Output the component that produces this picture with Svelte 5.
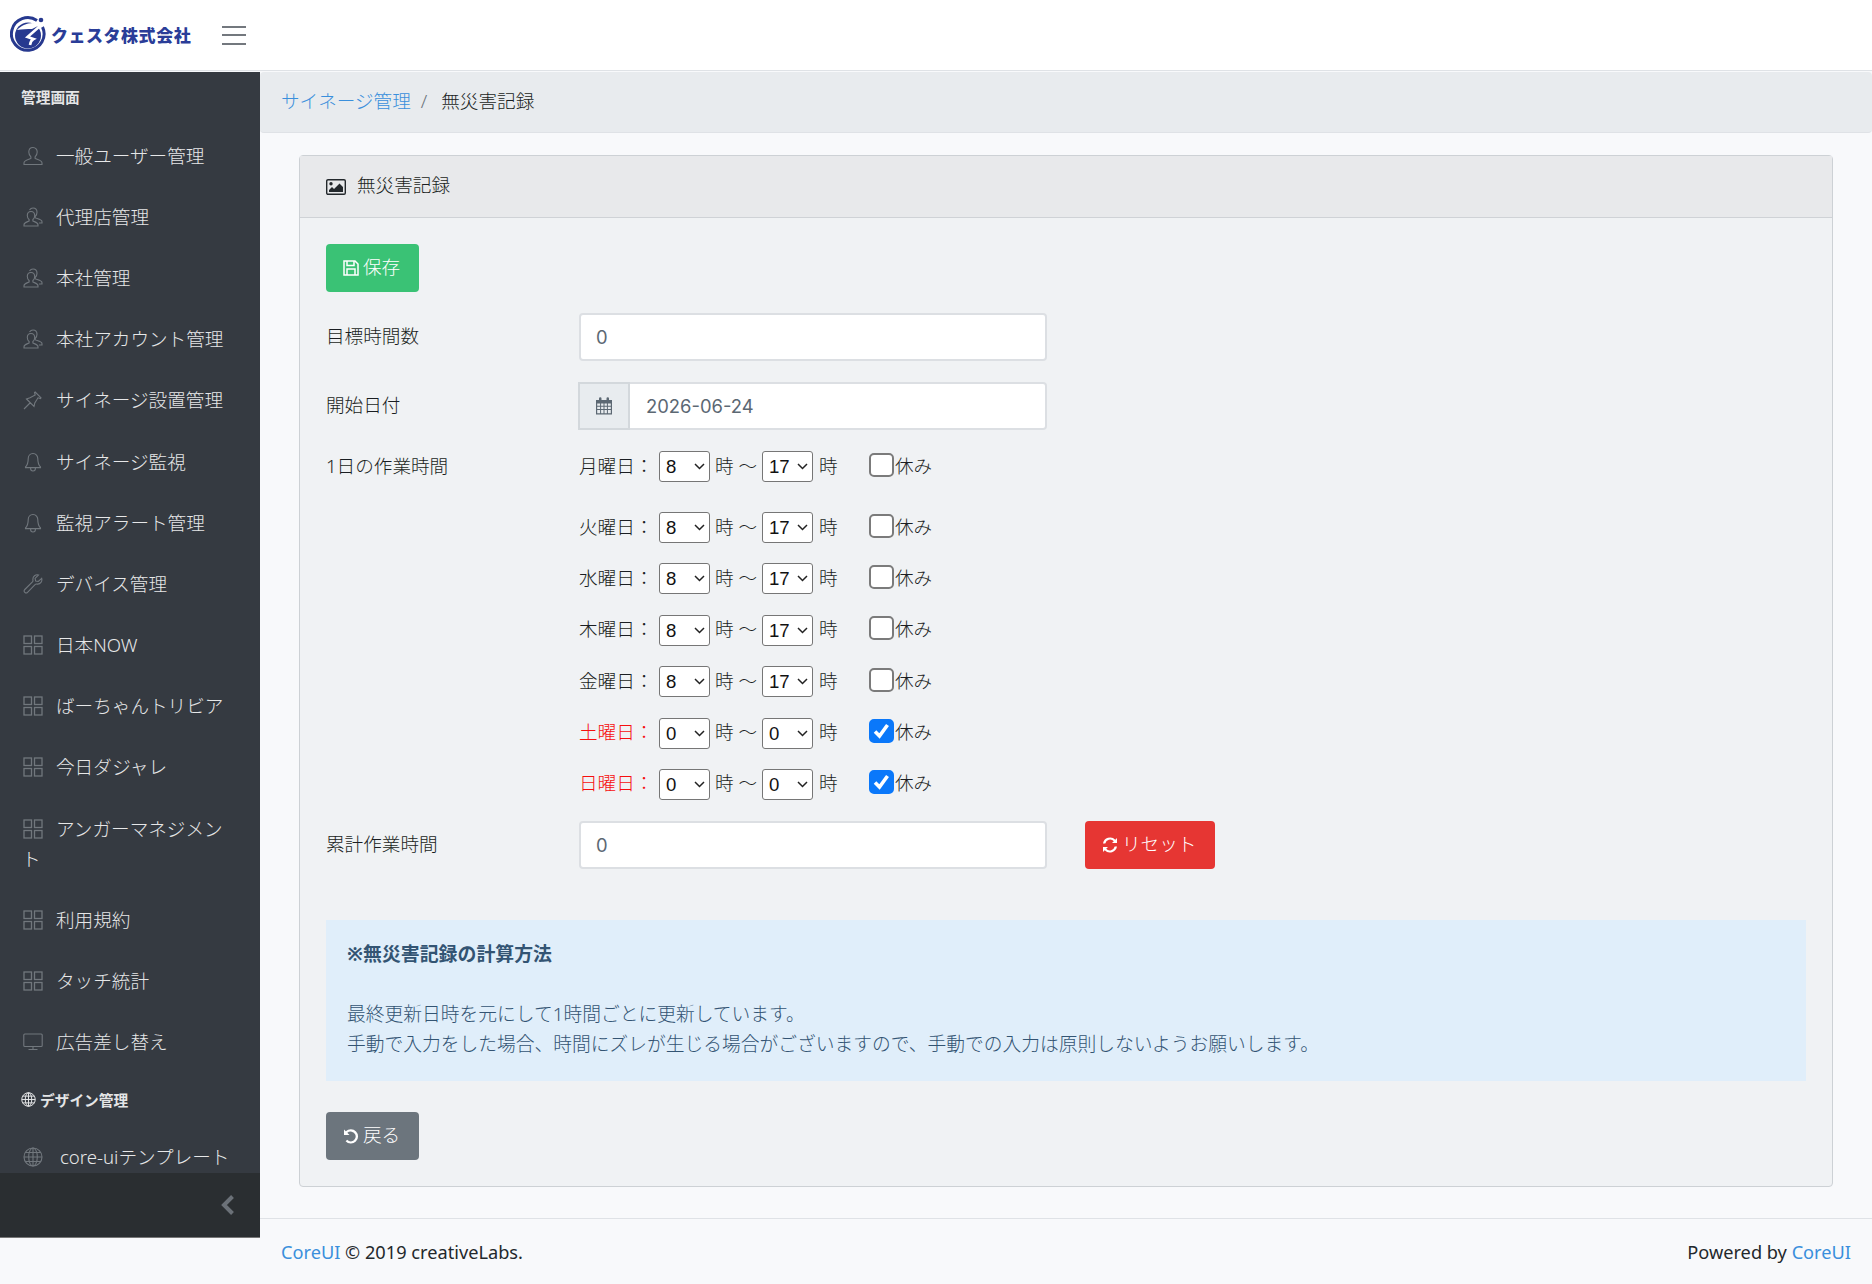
<script>
  const nav = [
    ['user', '一般ユーザー管理'], ['people', '代理店管理'], ['people', '本社管理'], ['people', '本社アカウント管理'],
    ['pin', 'サイネージ設置管理'], ['bell', 'サイネージ監視'], ['bell', '監視アラート管理'], ['wrench', 'デバイス管理'],
    ['grid', '日本NOW'], ['grid', 'ばーちゃんトリビア'], ['grid', '今日ダジャレ'], ['grid', 'アンガーマネジメント'],
    ['grid', '利用規約'], ['grid', 'タッチ統計'], ['desktop', '広告差し替え']
  ];
  const days = [
    ['月', 8, 17, false], ['火', 8, 17, false], ['水', 8, 17, false], ['木', 8, 17, false],
    ['金', 8, 17, false], ['土', 0, 0, true], ['日', 0, 0, true]
  ];
  const hours = Array.from({ length: 25 }, (_, i) => i);
</script>

{#snippet icon(name)}
  <svg class="nav-icon" viewBox="0 0 20 20" fill="none" stroke="currentColor" stroke-width="1.100">
    {#if name === 'user'}
      <path d="M10 1.500c-2.700 0-4.200 2-4.200 4.600 0 2 .9 3.700 2.100 4.700v1.600c-1.500 1-6.900 1.500-6.900 4.500v1.600h18v-1.600c0-3-5.400-3.500-6.900-4.500v-1.600c1.200-1 2.100-2.700 2.100-4.700 0-2.600-1.500-4.600-4.200-4.600z"/>
    {:else if name === 'people'}
      <path d="M8 4.500c-2.400 0-3.700 1.800-3.700 4 0 1.800.8 3.200 1.800 4v1.500c-1.300.8-5.100 1.300-5.100 3.700v1.300h14v-1.300c0-2.400-3.800-2.900-5.100-3.700v-1.500c1-.8 1.800-2.200 1.800-4 0-2.200-1.300-4-3.700-4z"/>
      <path d="M6.500 3c.8-1.200 2-2 3.500-2 2.600 0 4 2 4 4.300 0 1.800-.8 3.300-1.800 4.200v1.400c1.300.8 6.800 1.300 6.800 3.800v1.300h-3"/>
    {:else if name === 'pin'}
      <path d="M1 19l6.500-6.500M3.500 9l7.500 7.500.8-3.500 3.200-5.200 2.500 .7.500-.7-5.800-5.800-.7.500.7 2.500L7 7.700z"/>
    {:else if name === 'bell'}
      <path d="M10 1.500c-3 0-4.800 2.300-4.800 5.200 0 4-.9 6.500-2.700 8.300v.6h15V15c-1.800-1.800-2.700-4.300-2.700-8.300 0-2.900-1.800-5.200-4.800-5.200z"/>
      <path d="M7.500 15.700c0 2.200 1.100 3.300 2.500 3.300s2.500-1.100 2.500-3.300"/>
    {:else if name === 'wrench'}
      <path d="M18.700 4.300l-3.400 3.200-2.700-.4-.5-2.700L15.500 1c-2.700-.8-6 1.200-5.600 5 .1.800.2 1.300-.2 1.700L1.800 15.500c-1 1-.9 2 0 2.800.8.800 1.800.9 2.700 0l7.800-7.900c.4-.4 1-.4 1.700-.3 3.600.4 5.500-2.900 4.700-5.800z"/>
    {:else if name === 'grid'}
      <g stroke-width="1.300"><rect x="1" y="1" width="7.500" height="7.500"/><rect x="11.500" y="1" width="7.500" height="7.500"/><rect x="1" y="11.500" width="7.500" height="7.500"/><rect x="11.500" y="11.500" width="7.500" height="7.500"/></g>
    {:else if name === 'desktop'}
      <rect x=".8" y="2" width="18.400" height="12.500" rx="1"/><path d="M10 14.500v3M5.500 17.500h9"/>
    {:else if name === 'globe'}
      <circle cx="10" cy="10" r="9"/><ellipse cx="10" cy="10" rx="4.300" ry="9"/><path d="M10 1v18M1 10h18M2.200 5.500h15.600M2.200 14.500h15.600"/>
    {/if}
  </svg>
{/snippet}

<div class="app">
  <header class="topbar">
    <div class="brand">
      <svg class="logo" viewBox="0 0 37 38">
        <path d="M27 5.500A16.300 16.300 0 1 0 32.500 12" fill="none" stroke="#27398f" stroke-width="3"/>
        <circle cx="18" cy="20.500" r="13" fill="#27398f"/>
        <path d="M7 15c4-4 9-7 16-7l7 2-8 4c-5 0-10 0-15 1z" fill="#fff"/>
        <path d="M30 11 17.500 22l6 2c-2 1-3 3-3.500 6" fill="none" stroke="#fff" stroke-width="2.600"/>
        <circle cx="31" cy="5" r="2.300" fill="#27398f"/>
      </svg>
      <span class="brand-text">クェスタ株式会社</span>
    </div>
    <button class="burger" aria-label="メニュー"><i></i><i></i><i></i></button>
  </header>

  <div class="below">
    <aside class="sidebar">
      <nav class="nav">
        <div class="nav-title">管理画面</div>
        {#each nav as [ic, label]}
          <a class="nav-link" href="#top">{@render icon(ic)}<span class="nav-label">{label}</span></a>
        {/each}
        <div class="nav-title second">
          <svg class="title-globe" viewBox="0 0 20 20" fill="none" stroke="currentColor" stroke-width="1.300"><circle cx="10" cy="10" r="9"/><ellipse cx="10" cy="10" rx="4.300" ry="9"/><path d="M10 1v18M1 10h18M2.200 5.500h15.600M2.200 14.500h15.600"/></svg>
          デザイン管理
        </div>
        <a class="nav-link core" href="#top">{@render icon('globe')}<span class="nav-label">core-uiテンプレート</span></a>
      </nav>
      <div class="minimizer">
        <svg viewBox="0 0 14 20" width="14" height="20"><path d="M11.500 1.500 3 10l8.500 8.500" fill="none" stroke="#6b7178" stroke-width="4"/></svg>
      </div>
    </aside>

    <div class="main">
      <ol class="breadcrumb">
        <li><a href="#top">サイネージ管理</a></li>
        <li class="sep">/</li>
        <li>無災害記録</li>
      </ol>

      <section class="card">
        <div class="card-header">
          <svg class="pic" viewBox="0 0 20 16"><rect x=".7" y=".7" width="18.600" height="14.600" rx="1.300" fill="none" stroke="#23282c" stroke-width="1.400"/><circle cx="5" cy="4.800" r="1.700" fill="#23282c"/><path d="M3 13v-2l3-3 2 2 5.500-5.500L17 8v5z" fill="#23282c"/></svg>
          <span>無災害記録</span>
        </div>
        <div class="card-body">
          <button class="btn green">
            <svg class="btn-icon" viewBox="0 0 16 16" fill="none" stroke="#fff" stroke-width="1.500"><path d="M1 1h11l3 3v11H1z"/><path d="M4 1v4.500h7V1M4 15V9h8v6"/></svg><span>保存</span>
          </button>

          <div class="form-row">
            <label class="col-label" for="target">目標時間数</label>
            <input id="target" class="control" type="text" value="0" />
          </div>

          <div class="form-row">
            <label class="col-label" for="start">開始日付</label>
            <div class="input-group">
              <span class="prepend">
                <svg viewBox="0 0 18 18" width="18" height="18" fill="#5c6873"><path d="M1 3h3V1.500a1 1 0 0 1 2.500 0V3h5V1.500a1 1 0 0 1 2.500 0V3h3v14.500H1zM2.200 6.500v2.200h2.900V6.500zm3.900 0v2.200H8.500V6.500zm3.400 0v2.200h2.400V6.500zm3.400 0v2.200h2.900V6.500zM2.200 9.700v2.400h2.900V9.700zm3.900 0v2.400H8.500V9.700zm3.400 0v2.400h2.400V9.700zm3.400 0v2.400h2.900V9.700zM2.200 13.100v3.100h2.900v-3.100zm3.900 0v3.100H8.500v-3.100zm3.400 0v3.100h2.400v-3.100zm3.400 0v3.100h2.900v-3.100z" fill-rule="evenodd"/></svg>
              </span>
              <input id="start" class="control date" type="text" value="2026-06-24" />
            </div>
          </div>

          <div class="form-row schedule">
            <div class="col-label sched-label">1日の作業時間</div>
            <div class="days">
              {#each days as [d, from, to, off], i}
                <div class="day" class:first={i === 0} class:red={d === '土' || d === '日'}>
                  <span class="day-name">{d}曜日：</span>
                  <select class="sel" value={from}>
                    {#each hours as h}<option value={h}>{h}</option>{/each}
                  </select>
                  <span class="tilde">時 〜</span>
                  <select class="sel" value={to}>
                    {#each hours as h}<option value={h}>{h}</option>{/each}
                  </select>
                  <span class="hour">時</span>
                  <input class="rest" type="checkbox" checked={off} />
                  <span class="rest-label">休み</span>
                </div>
              {/each}
            </div>
          </div>

          <div class="form-row">
            <label class="col-label" for="total">累計作業時間</label>
            <input id="total" class="control" type="text" value="0" />
            <button class="btn red-btn">
              <svg class="btn-icon" viewBox="0 0 16 16"><path d="M15 1v5h-5l1.800-1.800A5 5 0 0 0 3.300 6.500H1A7.200 7.200 0 0 1 13.300 2.700zM1 15v-5h5l-1.800 1.800a5 5 0 0 0 8.500-2.300H15A7.200 7.200 0 0 1 2.700 13.300z" fill="#fff"/></svg><span>リセット</span>
            </button>
          </div>

          <div class="info">
            <strong>※無災害記録の計算方法</strong><br /><br />
            最終更新日時を元にして1時間ごとに更新しています。<br />
            手動で入力をした場合、時間にズレが生じる場合がございますので、手動での入力は原則しないようお願いします。
          </div>

          <button class="btn gray">
            <svg class="btn-icon" viewBox="0 0 16 16"><path d="M1 1.500v5.500h5.500L4.300 4.800A5 5 0 1 1 8 13.500a5 5 0 0 1-3.800-1.700l-1.600 1.500A7.200 7.200 0 1 0 2.800 3.300z" fill="#fff"/></svg><span>戻る</span>
          </button>
        </div>
      </section>

      <footer class="footer">
        <span><a href="#top">CoreUI</a> © 2019 creativeLabs.</span>
        <span>Powered by <a href="#top">CoreUI</a></span>
      </footer>
    </div>
  </div>
</div>

<style>
  :global(body) {
    margin: 0;
    background: #f8f9fb;
    color: #1a1e22;
    font-family: "Noto Sans", "Noto Sans CJK JP", sans-serif;
    font-size: 18.6px;
    font-weight: 300;
    line-height: 30px;
  }
  .app { height: 1284px; display: flex; flex-direction: column; overflow: hidden; }
  a { color: #3a8fdc; text-decoration: none; }

  .topbar {
    height: 70px;
    flex: none;
    background: #fff;
    border-bottom: 1px solid #dfe2e6;
    display: flex;
    align-items: center;
  }
  .brand { width: 222px; display: flex; align-items: center; padding-left: 10px; box-sizing: border-box; }
  .logo { width: 37px; height: 38px; flex: none; margin-top: -2px; }
  .brand-text { margin-left: 4px; font-size: 17px; font-weight: 900; letter-spacing: .55px; color: #2a3d98; font-family: "Noto Sans CJK JP", sans-serif; white-space: nowrap; }
  .burger { width: 24px; height: 19px; padding: 0; border: 0; background: none; display: flex; flex-direction: column; justify-content: space-between; }
  .burger i { display: block; height: 2px; background: #73787e; }

  .below { flex: 1; display: flex; min-height: 0; }

  .sidebar { width: 260px; height: 1166px; flex: none; margin-top: 1px; background: #353a41; color: #e8e9ea; display: flex; flex-direction: column; }
  .nav { flex: 1; min-height: 0; overflow: hidden; padding-top: 10px; }
  .nav-title { font-size: 14.7px; font-weight: 700; padding: 0 21px; height: 30px; line-height: 30px; margin-bottom: 14px; color: #e4e5e6; }
  .nav-title.second { margin: 11px 0 13px; display: flex; align-items: center; gap: 4px; }
  .title-globe { width: 15px; height: 15px; }
  .nav-link { display: block; padding: 14.600px 24px 16.600px 22px; color: #e6e7e8; }
  .nav-icon { width: 20px; height: 20px; color: #71777d; vertical-align: -3px; margin: 0 13px 0 1px; }
  .core .nav-icon { margin-right: 17px; }

  .minimizer { height: 65px; flex: none; background: #2a2e31; border-bottom: 1px solid #777; box-sizing: border-box; display: flex; align-items: center; justify-content: flex-end; padding-right: 25px; }

  .main { flex: 1; min-width: 0; display: flex; flex-direction: column; }

  .breadcrumb {
    list-style: none;
    margin: 1px 0 0;
    height: 61px;
    flex: none;
    box-sizing: border-box;
    padding: 0 21px 2px;
    display: flex;
    align-items: center;
    background: #e8ebee;
    border-bottom: 1px solid #dfe2e6;
    border-radius: 4px;
  }
  .sep { padding: 0 14px 0 10px; color: #6c757d; }

  .card { margin: 22px 39px 0; border: 1px solid #cdd1d5; border-radius: 4px; background: #f0f2f4; }
  .card-header { height: 62px; box-sizing: border-box; display: flex; align-items: center; gap: 11px; padding: 0 26px; background: #e8e9eb; border-bottom: 1px solid #cfd2d6; }
  .card-header span { padding-bottom: 3px; }
  .pic { width: 20px; height: 16px; }
  .card-body { padding: 26px 26px 26px; }

  .btn { height: 48px; box-sizing: border-box; border: 1px solid transparent; border-radius: 4px; color: #fff; font: inherit; padding: 0 16px; display: inline-flex; align-items: center; gap: 4px; }
  .btn span { padding-bottom: 2px; }
  .btn-icon { width: 16px; height: 16px; flex: none; }
  .green { background: #3ac275; width: 93px; display: flex; }
  .red-btn { background: #e63633; width: 130px; margin-left: 38px; padding: 0 16px; }
  .gray { background: #6c757d; width: 93px; display: flex; margin-top: 31px; }

  .form-row { display: flex; align-items: center; margin-top: 21px; }
  .col-label { width: 253px; flex: none; padding-bottom: 2px; }
  .control { box-sizing: border-box; width: 468px; height: 48px; border: 2px solid #dcdfe3; border-radius: 4px; background: #fff; color: #5c6873; font-family: Inter, sans-serif; font-size: 18.4px; font-weight: 400; padding: 0 15px; outline: none; }
  .input-group { display: flex; width: 469px; margin-left: -1px; }
  .prepend { width: 52px; height: 48px; box-sizing: border-box; flex: none; display: flex; align-items: center; justify-content: center; background: #e8ecef; border: 2px solid #d3d8dc; }
  .date { flex: 1; width: auto; border-left: 0; border-radius: 0 4px 4px 0; padding-left: 16px; }

  .schedule { align-items: flex-start; }
  .sched-label { line-height: 30px; }
  .days { display: flex; flex-direction: column; }
  .day { display: flex; align-items: center; height: 31px; margin-bottom: 20.400px; }
  .day.first { margin-bottom: 30px; }
  .day:last-child { margin-bottom: 0; }
  .day span { padding-bottom: 2px; }
  .day-name { width: 80px; flex: none; white-space: nowrap; }
  .red .day-name { color: #f60f0f; }
  .sel {
    appearance: none;
    width: 51px;
    height: 31px;
    box-sizing: border-box;
    font-family: "Liberation Sans", sans-serif;
    font-size: 18.600px;
    color: #111;
    border: 1px solid #767676;
    border-radius: 3px;
    padding: 0 0 0 6px;
    margin: 0;
    background: #fff url("data:image/svg+xml,%3Csvg xmlns='http://www.w3.org/2000/svg' width='11' height='7'%3E%3Cpath d='M1 1l4.500 4.500L10 1' fill='none' stroke='%23222' stroke-width='1.500'/%3E%3C/svg%3E") no-repeat right 4px center;
  }
  .tilde { width: 52px; flex: none; text-align: center; white-space: nowrap; }
  .hour { width: 56px; flex: none; padding-left: 6px; box-sizing: border-box; }
  .rest {
    appearance: none;
    width: 25px;
    height: 24px;
    margin: -4px 0 0;
    flex: none;
    box-sizing: border-box;
    background: #fff;
    border: 2px solid #7b7b7b;
    border-radius: 5px;
  }
  .rest:checked {
    border-color: #0a78fa;
    background: #0a78fa url("data:image/svg+xml,%3Csvg xmlns='http://www.w3.org/2000/svg' width='21' height='20'%3E%3Cpath d='M4 10.500l4.500 4.500L16.500 4' fill='none' stroke='%23fff' stroke-width='3.600'/%3E%3C/svg%3E") no-repeat center;
  }
  .rest-label { margin-left: 1px; }

  .info { margin-top: 51px; background: #e0eefa; color: #335473; padding: 19px 21px 22px; font-size: 18.750px; }
  .info strong { font-weight: 700; font-size: 18.900px; }

  .footer { margin-top: auto; height: 66px; flex: none; box-sizing: border-box; display: flex; align-items: center; justify-content: space-between; padding: 0 21px; border-top: 1px solid #dfe2e6; background: #f8f9fb; font-size: 18.200px; font-weight: 400; color: #23282c; }
</style>
